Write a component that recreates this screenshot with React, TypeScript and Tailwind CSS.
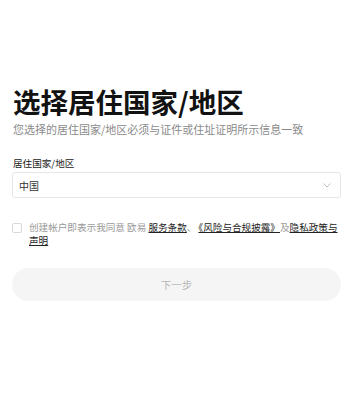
import React from "react";

export default function App() {
  return (
    <div
      className="w-[354px] h-[394px] bg-white px-[12px] pt-[83px]"
      style={{ fontFamily: '"Noto Sans CJK SC", "Noto Sans", sans-serif' }}
    >
      <h1 className="text-[27.5px] leading-[37px] font-bold text-[#121212] pl-[1px]">选择居住国家/地区</h1>
      <p className="mt-[1px] text-[11px] leading-[16px] text-[#8a8a8a] pl-[1px]">
        您选择的居住国家/地区必须与证件或住址证明所示信息一致
      </p>
      <div className="mt-[19px] text-[9.6px] leading-[14px] text-[#222] pl-[1px]">居住国家/地区</div>
      <div className="mt-[2px] h-[26px] w-[329px] border border-[#e6e6e6] rounded-[3px] flex items-center justify-between pl-[6px] pr-[9px]">
        <span className="text-[10px] text-[#333]">中国</span>
        <svg width="8" height="5" viewBox="0 0 8 5" fill="none">
          <path d="M0.5 0.5l3.5 3.5 3.5-3.5" stroke="#bdbdbd" strokeWidth="1" />
        </svg>
      </div>
      <div className="mt-[23px] flex gap-[7px]">
        <div className="mt-[2px] w-[10px] h-[10px] shrink-0 border border-[#d9d9d9] rounded-[2px]" />
        <p className="text-[9.6px] leading-[13px] text-[#9a9a9a]">
          {"创建帐户即表示我同意 欧易 "}
          <span className="text-[#222] underline">服务条款</span>
          {"、"}
          <span className="ml-[2px] text-[#222] underline">《风险与合规披露》</span>
          {"及"}
          <span className="text-[#222] underline">隐私政策与声明</span>
        </p>
      </div>
      <button className="mt-[21px] w-[329px] h-[33px] rounded-full bg-[#f5f5f5] text-[10.5px] text-[#b8b8b8]">
        下一步
      </button>
    </div>
  );
}
